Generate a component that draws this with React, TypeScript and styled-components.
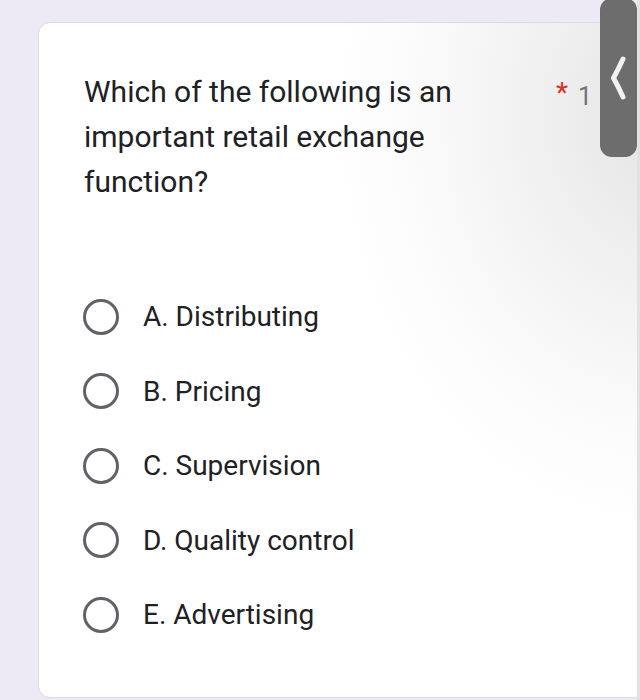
import React from 'react';
import styled, { createGlobalStyle } from 'styled-components';

const GlobalStyle = createGlobalStyle`
  html, body {
    margin: 0;
    padding: 0;
    overflow: hidden;
  }

  body {
    width: 640px;
    height: 700px;
    background: #ede9f5;
    font-family: Roboto, "Liberation Sans", Arial, sans-serif;
  }
`;

const Page = styled.div`
  position: relative;
  width: 640px;
  height: 700px;
  padding: 22px 0 0 38px;
  box-sizing: border-box;
  overflow: hidden;
`;

const Card = styled.div`
  width: 620px;
  height: 676px;
  box-sizing: border-box;
  padding: 46px 0 0 45px;

  background:
    radial-gradient(ellipse 330px 420px at 620px 90px, #e4e4e4 0%, #f1f1f1 40%, #fbfbfb 75%, #ffffff 100%);
  border: 1px solid #dcdbe0;
  border-radius: 12px;
`;

const Header = styled.div`
  display: flex;
  align-items: flex-start;
`;

const Question = styled.div`
  width: 430px;
  font-size: 30px;
  line-height: 45px;
  color: #202124;
`;

const Required = styled.div`
  display: flex;
  align-items: center;
  gap: 10px;
  margin: 8px 0 0 42px;
`;

const Asterisk = styled.span`
  font-size: 28px;
  line-height: 24px;
  color: #d93025;
`;

const Points = styled.span`
  font-size: 25px;
  line-height: 24px;
  color: #70757a;
  margin-top: 8px;
`;

const Hidden = styled.span`
  width: 3px;
  height: 16px;
  margin: 12px 0 0 -2px;
  background: #555;
`;

const Options = styled.div`
  display: flex;
  flex-direction: column;
  gap: 37.5px;
  margin-top: 94px;
`;

const Option = styled.label`
  display: flex;
  align-items: center;
  gap: 24px;
  height: 37px;
  font-size: 28px;
  color: #202124;
`;

const Radio = styled.span`
  width: 36px;
  height: 36px;
  box-sizing: border-box;
  border: 3.5px solid #5f6368;
  border-radius: 50%;
  flex-shrink: 0;
  margin-left: -1px;
`;

const SideTab = styled.div`
  position: absolute;
  top: -2px;
  right: 3px;
  width: 37px;
  height: 159px;
  display: flex;
  align-items: center;
  justify-content: center;
  background: #6d6d6d;
  border-radius: 12px;
`;

const EdgeStrip = styled.div`
  position: absolute;
  top: 0;
  right: 0;
  width: 3px;
  height: 700px;
  background: #e2e2e2;
`;

const options = [
  'A. Distributing',
  'B. Pricing',
  'C. Supervision',
  'D. Quality control',
  'E. Advertising',
];

const App = () => (
  <>
    <GlobalStyle />
    <Page>
      <Card>
        <Header>
          <Question>
            Which of the following is an important retail exchange function?
          </Question>
          <Required>
            <Asterisk>*</Asterisk>
            <Points>1</Points>
            <Hidden />
          </Required>
        </Header>
        <Options>
          {options.map((o) => (
            <Option key={o}>
              <Radio />
              {o}
            </Option>
          ))}
        </Options>
      </Card>
      <EdgeStrip />
      <SideTab>
        <svg width="20" height="44" viewBox="0 0 20 44">
          <path
            d="M14 3 Q9 14 4.5 22 Q9 30 14 41"
            fill="none"
            stroke="#f2f2f2"
            strokeWidth="5"
            strokeLinecap="round"
            strokeLinejoin="round"
          />
        </svg>
      </SideTab>
    </Page>
  </>
);

export default App;
